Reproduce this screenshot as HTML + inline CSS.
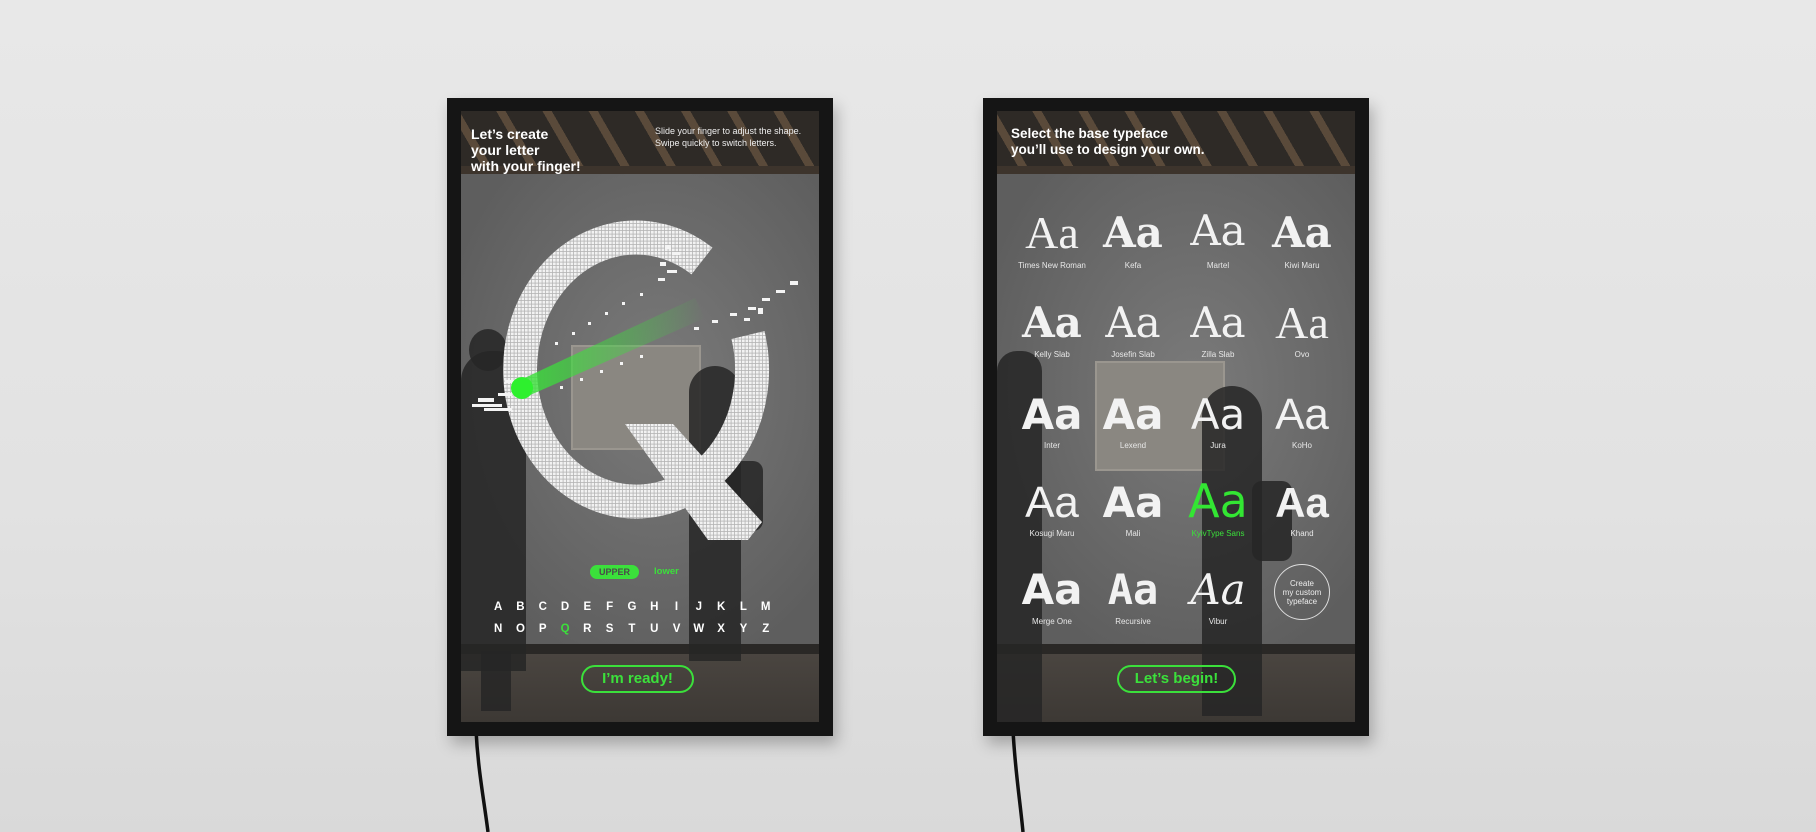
<!DOCTYPE html>
<html><head><meta charset="utf-8">
<style>
*{margin:0;padding:0;box-sizing:border-box}
body{width:1816px;height:832px;overflow:hidden;position:relative;background:linear-gradient(180deg,#e8e8e8 0%,#e2e2e2 60%,#d9d9d9 100%);font-family:"Liberation Sans","DejaVu Sans",sans-serif}
.abs{position:absolute}
.frame{position:absolute;top:98px;width:386px;height:638px;background:#151515;box-shadow:4px 8px 14px rgba(0,0,0,.25)}
.screen{position:absolute;top:111px;width:358px;height:611px;overflow:hidden;background:#6a6a6a}
.ceil{position:absolute;left:0;top:0;width:100%;height:63px;background:repeating-linear-gradient(60deg,#2e2a26 0 22px,#5a4a3a 22px 30px,#2e2a26 30px 40px),#333}
.ceil:after{content:"";position:absolute;left:0;bottom:0;width:100%;height:8px;background:#3d342c}
.wall{position:absolute;left:0;top:63px;width:100%;height:470px;background:radial-gradient(ellipse at 55% 45%,#7a7a7a,#5e5e5e 80%)}
.floor{position:absolute;left:0;top:533px;width:100%;height:80px;background:linear-gradient(180deg,#2a2826 0 10px,#4a4540 10px,#3c3834 100%)}
.paint{position:absolute;background:#8a8781;border:2px solid #9a968f}
.dark{position:absolute;background:#262626;opacity:.85}
.t1{position:absolute;color:#fff;font-weight:bold;font-size:14px;line-height:16px}
.t2{position:absolute;color:#eee;font-size:9px;line-height:12px}
.btn{position:absolute;border:2px solid #3be03b;border-radius:15px;color:#3be03b;font-weight:bold;font-size:15px;text-align:center;line-height:24px}
.aa{position:absolute;width:90px;margin-left:-45px;text-align:center;color:#f2f2f2;font-size:42px;line-height:46px}
.lb{position:absolute;width:100px;margin-left:-50px;text-align:center;color:#e8e8e8;font-size:8px}
.cable{position:absolute}
</style></head><body>

<svg class="cable" style="left:0;top:0" width="1816" height="832"><path d="M476 730 C478 770 484 800 488 832" stroke="#111" stroke-width="3.5" fill="none"/><path d="M1013 730 C1015 770 1020 800 1023 832" stroke="#111" stroke-width="3.5" fill="none"/></svg>

<div class="frame" style="left:447px"></div>
<div class="frame" style="left:983px"></div>

<!-- LEFT SCREEN -->
<div class="screen" style="left:461px">
 <div class="ceil"></div><div class="wall"></div><div class="floor"></div>
 <div class="paint" style="left:110px;top:234px;width:130px;height:105px"></div>
 <div class="dark" style="left:0;top:240px;width:65px;height:320px;border-radius:30px 30px 0 0"></div>
 <div class="dark" style="left:8px;top:218px;width:38px;height:42px;border-radius:50%"></div>
 <div class="dark" style="left:20px;top:540px;width:30px;height:60px"></div>
 <div class="dark" style="left:228px;top:255px;width:52px;height:295px;border-radius:26px 26px 0 0"></div>
 <div class="dark" style="left:262px;top:350px;width:40px;height:70px;border-radius:10px"></div>
 <div class="t1" style="left:10px;top:15px">Let’s create<br>your letter<br>with your finger!</div>
 <div class="t2" style="left:194px;top:14px">Slide your finger to adjust the shape.<br>Swipe quickly to switch letters.</div>
</div>
<svg class="abs" style="left:0;top:0" width="1816" height="832">
 <defs><pattern id="g" width="3.5" height="3.5" patternUnits="userSpaceOnUse"><rect width="3.5" height="3.5" fill="#b4b4b4"/><rect width="2.7" height="2.7" fill="#f2f2f2"/></pattern>
 <linearGradient id="bm" x1="0" y1="0" x2="1" y2="0"><stop offset="0" stop-color="#3be03b" stop-opacity=".9"/><stop offset="1" stop-color="#3be03b" stop-opacity="0"/></linearGradient></defs>
 <path d="M702 261 A116 132 0 1 0 748 335" stroke="url(#g)" stroke-width="34" fill="none"/>
 <polygon points="625,424 673,424 762,522 748,540 708,540" fill="url(#g)"/>
 <g fill="#f4f4f4">
  <rect x="665" y="245" width="6" height="4"/><rect x="672" y="252" width="8" height="3"/><rect x="660" y="262" width="6" height="4"/><rect x="667" y="270" width="10" height="3"/><rect x="658" y="278" width="7" height="3"/>
  <rect x="790" y="281" width="8" height="4"/><rect x="776" y="290" width="9" height="3"/><rect x="762" y="298" width="8" height="3"/><rect x="748" y="307" width="8" height="3"/><rect x="730" y="313" width="7" height="3"/><rect x="712" y="320" width="6" height="3"/><rect x="694" y="327" width="5" height="3"/><rect x="744" y="318" width="6" height="3"/><rect x="758" y="308" width="5" height="6"/>
  <rect x="640" y="293" width="3" height="3"/><rect x="622" y="302" width="3" height="3"/><rect x="605" y="312" width="3" height="3"/><rect x="588" y="322" width="3" height="3"/><rect x="572" y="332" width="3" height="3"/><rect x="555" y="342" width="3" height="3"/>
  <rect x="640" y="355" width="3" height="3"/><rect x="620" y="362" width="3" height="3"/><rect x="600" y="370" width="3" height="3"/><rect x="580" y="378" width="3" height="3"/><rect x="560" y="386" width="3" height="3"/>
  <rect x="498" y="393" width="14" height="3"/><rect x="478" y="398" width="16" height="4"/><rect x="472" y="404" width="30" height="3"/><rect x="484" y="408" width="28" height="3"/><rect x="505" y="380" width="10" height="3"/>
 </g>
 <polygon points="516,382 695,298 705,318 528,396" fill="url(#bm)"/>
 <circle cx="522" cy="388" r="11" fill="#2ef02e"/>
</svg>
<div class="abs" style="left:590px;top:565px;width:49px;height:14px;background:#3be03b;border-radius:7px;color:#4a4a4a;font-size:9px;font-weight:bold;text-align:center;line-height:14px">UPPER</div>
<div class="abs" style="left:654px;top:565px;color:#3be03b;font-size:9.5px;font-weight:bold;line-height:14px">lower</div>
<div class="abs" style="left:487px;top:596px;color:#fff;font-weight:bold;font-size:11.5px;line-height:22px;width:300px">
 <div style="display:flex">
 <span style="width:22.3px;text-align:center">A</span><span style="width:22.3px;text-align:center">B</span><span style="width:22.3px;text-align:center">C</span><span style="width:22.3px;text-align:center">D</span><span style="width:22.3px;text-align:center">E</span><span style="width:22.3px;text-align:center">F</span><span style="width:22.3px;text-align:center">G</span><span style="width:22.3px;text-align:center">H</span><span style="width:22.3px;text-align:center">I</span><span style="width:22.3px;text-align:center">J</span><span style="width:22.3px;text-align:center">K</span><span style="width:22.3px;text-align:center">L</span><span style="width:22.3px;text-align:center">M</span></div>
 <div style="display:flex">
 <span style="width:22.3px;text-align:center">N</span><span style="width:22.3px;text-align:center">O</span><span style="width:22.3px;text-align:center">P</span><span style="width:22.3px;text-align:center;color:#3be03b">Q</span><span style="width:22.3px;text-align:center">R</span><span style="width:22.3px;text-align:center">S</span><span style="width:22.3px;text-align:center">T</span><span style="width:22.3px;text-align:center">U</span><span style="width:22.3px;text-align:center">V</span><span style="width:22.3px;text-align:center">W</span><span style="width:22.3px;text-align:center">X</span><span style="width:22.3px;text-align:center">Y</span><span style="width:22.3px;text-align:center">Z</span></div>
</div>
<div class="btn" style="left:581px;top:665px;width:113px;height:28px">I’m ready!</div>

<!-- RIGHT SCREEN -->
<div class="screen" style="left:997px">
 <div class="ceil"></div><div class="wall"></div><div class="floor"></div>
 <div class="paint" style="left:98px;top:250px;width:130px;height:110px"></div>
 <div class="dark" style="left:0;top:240px;width:45px;height:470px;border-radius:20px 20px 0 0"></div>
 <div class="dark" style="left:205px;top:275px;width:60px;height:330px;border-radius:30px 30px 0 0"></div>
 <div class="dark" style="left:255px;top:370px;width:40px;height:80px;border-radius:10px"></div>
 <div class="t1" style="left:14px;top:15px;font-size:13.5px;line-height:16px">Select the base typeface<br>you’ll use to design your own.</div>
</div>
<div class="aa" style="left:1052px;top:210px;font-family:'Liberation Serif',serif;font-size:46px">Aa</div>
<div class="aa" style="left:1133px;top:210px;font-family:'DejaVu Serif',serif;font-weight:bold">Aa</div>
<div class="aa" style="left:1218px;top:208px;font-family:'DejaVu Serif',serif">Aa</div>
<div class="aa" style="left:1302px;top:210px;font-family:'DejaVu Serif',serif;font-weight:bold">Aa</div>
<div class="lb" style="left:1052px;top:261px">Times New Roman</div><div class="lb" style="left:1133px;top:261px">Kefa</div><div class="lb" style="left:1218px;top:261px">Martel</div><div class="lb" style="left:1302px;top:261px">Kiwi Maru</div>

<div class="aa" style="left:1052px;top:300px;font-family:'DejaVu Serif',serif;font-weight:bold">Aa</div>
<div class="aa" style="left:1133px;top:300px;font-family:'DejaVu Serif',serif">Aa</div>
<div class="aa" style="left:1218px;top:300px;font-family:'DejaVu Serif',serif">Aa</div>
<div class="aa" style="left:1302px;top:300px;font-family:'Liberation Serif',serif;font-size:46px">Aa</div>
<div class="lb" style="left:1052px;top:350px">Kelly Slab</div><div class="lb" style="left:1133px;top:350px">Josefin Slab</div><div class="lb" style="left:1218px;top:350px">Zilla Slab</div><div class="lb" style="left:1302px;top:350px">Ovo</div>

<div class="aa" style="left:1052px;top:392px;font-family:'DejaVu Sans',sans-serif;font-weight:bold">Aa</div>
<div class="aa" style="left:1133px;top:392px;font-family:'DejaVu Sans',sans-serif;font-weight:bold">Aa</div>
<div class="aa" style="left:1218px;top:392px;font-family:'DejaVu Sans',sans-serif">Aa</div>
<div class="aa" style="left:1302px;top:392px;font-family:'Liberation Sans',sans-serif;font-size:44px">Aa</div>
<div class="lb" style="left:1052px;top:441px">Inter</div><div class="lb" style="left:1133px;top:441px">Lexend</div><div class="lb" style="left:1218px;top:441px">Jura</div><div class="lb" style="left:1302px;top:441px">KoHo</div>

<div class="aa" style="left:1052px;top:480px;font-family:'Liberation Sans',sans-serif;font-size:44px">Aa</div>
<div class="aa" style="left:1133px;top:480px;font-family:'DejaVu Sans',sans-serif;font-weight:bold">Aa</div>
<div class="aa" style="left:1218px;top:478px;font-family:'DejaVu Sans',sans-serif;color:#33e633;font-size:46px">Aa</div>
<div class="aa" style="left:1302px;top:480px;font-family:'Liberation Sans Narrow','Liberation Sans',sans-serif;font-weight:bold">Aa</div>
<div class="lb" style="left:1052px;top:529px">Kosugi Maru</div><div class="lb" style="left:1133px;top:529px">Mali</div><div class="lb" style="left:1218px;top:529px;color:#3be03b">KyivType Sans</div><div class="lb" style="left:1302px;top:529px">Khand</div>

<div class="aa" style="left:1052px;top:567px;font-family:'DejaVu Sans',sans-serif;font-weight:bold">Aa</div>
<div class="aa" style="left:1133px;top:567px;font-family:'DejaVu Sans Mono',monospace;font-weight:bold">Aa</div>
<div class="aa" style="left:1218px;top:567px;font-family:'DejaVu Serif',serif;font-style:italic">Aa</div>
<div class="lb" style="left:1052px;top:617px">Merge One</div><div class="lb" style="left:1133px;top:617px">Recursive</div><div class="lb" style="left:1218px;top:617px">Vibur</div>
<div class="abs" style="left:1274px;top:564px;width:56px;height:56px;border:1.3px solid #ddd;border-radius:50%;color:#eee;font-size:8px;line-height:9px;text-align:center;padding-top:14px">Create<br>my custom<br>typeface</div>
<div class="btn" style="left:1117px;top:665px;width:119px;height:28px">Let’s begin!</div>
</body></html>
